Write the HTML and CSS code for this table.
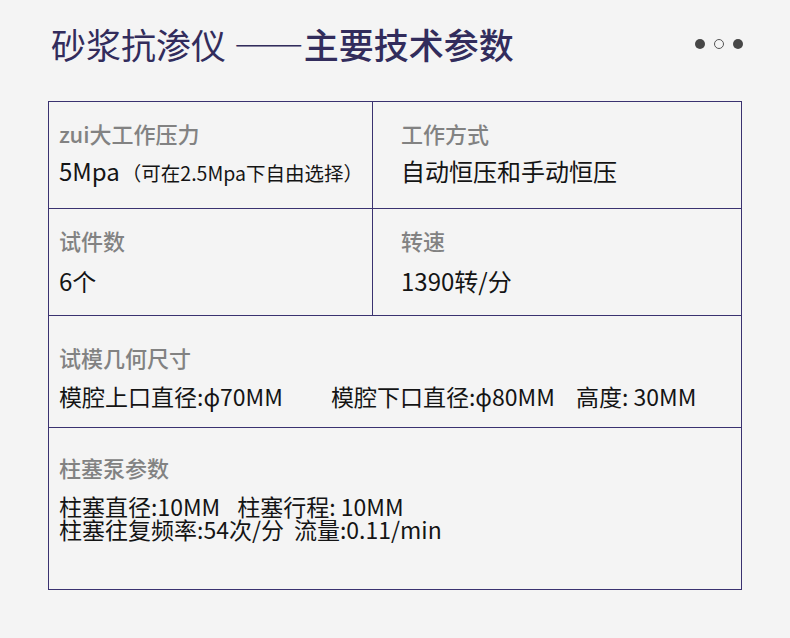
FILE: index.html
```html
<!DOCTYPE html>
<html lang="zh">
<head>
<meta charset="utf-8">
<title>砂浆抗渗仪 主要技术参数</title>
<link rel="stylesheet" href="styles.css">
</head>
<body>
<div class="page">
  <header class="header">
    <h1 class="title"><span class="title-a">砂浆抗渗仪 </span><span class="title-b">——主要技术参数</span></h1>
    <div class="dots">
      <span class="dot"></span>
      <span class="dot dot-hollow"></span>
      <span class="dot"></span>
    </div>
  </header>

  <div class="specs">
    <div class="row row-split row-first">
      <div class="cell cell-left">
        <div class="label">zui大工作压力</div>
        <div class="value">5Mpa<span class="note">（可在2.5Mpa下自由选择）</span></div>
      </div>
      <div class="cell cell-right">
        <div class="label">工作方式</div>
        <div class="value">自动恒压和手动恒压</div>
      </div>
    </div>
    <div class="row row-split row-second">
      <div class="cell cell-left">
        <div class="label">试件数</div>
        <div class="value">6个</div>
      </div>
      <div class="cell cell-right">
        <div class="label">转速</div>
        <div class="value">1390转/分</div>
      </div>
    </div>
    <div class="row row-mould">
      <div class="cell cell-left cell-mould">
        <div class="label">试模几何尺寸</div>
        <div class="value value-sm"><span>模腔上口直径:ɸ70MM</span><span class="sp-wide">模腔下口直径:ɸ80MM</span><span class="sp-narrow">高度: 30MM</span></div>
      </div>
    </div>
    <div class="row row-pump">
      <div class="cell cell-left cell-pump">
        <div class="label">柱塞泵参数</div>
        <div class="value value-sm value-lines">
          <div>柱塞直径:10MM<span class="sp-mid">柱塞行程: 10MM</span></div>
          <div>柱塞往复频率:54次/分<span class="sp-small">流量:0.11/min</span></div>
        </div>
      </div>
    </div>
  </div>
</div>
</body>
</html>
```

FILE: styles.css
```css
* { box-sizing: border-box; }

html, body {
  margin: 0;
  padding: 0;
  background: #f4f4f4;
}

body {
  font-family: "Noto Sans CJK SC", "Noto Sans", sans-serif;
  color: #141414;
}

.page {
  width: 790px;
  height: 638px;
  padding-top: 26px;
}

.header {
  display: flex;
  align-items: center;
  justify-content: space-between;
  padding-left: 51px;
  padding-right: 47px;
  height: 35px;
}

.title {
  margin: 0;
  font-size: 35px;
  line-height: 35px;
  font-weight: 400;
  color: #322c5c;
  white-space: nowrap;
}

.title-b {
  font-weight: 500;
}

.dots {
  display: flex;
  gap: 9px;
  align-items: center;
}

.dot {
  width: 10px;
  height: 10px;
  border-radius: 50%;
  background: #474747;
}

.dot-hollow {
  background: transparent;
  border: 1.5px solid #555;
}

.specs {
  margin-top: 40px;
  margin-left: 48px;
  width: 694px;
  border: 1px solid #3a3270;
}

.row {
  border-bottom: 1px solid #3a3270;
}

.row:last-child {
  border-bottom: none;
}

.row-split {
  display: flex;
  height: 107px;
}

.row-mould {
  height: 112px;
}

.row-pump {
  height: 161px;
}

.cell {
  padding-top: 19px;
}

.cell-left {
  padding-left: 10px;
}

.row-split .cell-left {
  width: 324px;
  border-right: 1px solid #3a3270;
}

.cell-right {
  flex: 1;
  padding-left: 28px;
}

.cell-mould {
  padding-top: 29px;
}

.cell-pump {
  padding-top: 27px;
}

.label {
  font-size: 22px;
  line-height: 24px;
  font-weight: 500;
  color: #828282;
  margin-bottom: 16px;
}

.row-first .label {
  margin-bottom: 14px;
}

.row-second .label {
  margin-bottom: 17px;
}

.cell-mould .label {
  margin-bottom: 15px;
}

.value {
  font-size: 24px;
  line-height: 24px;
  white-space: nowrap;
}

.note {
  font-size: 19.5px;
  margin-left: 2px;
}

.value-sm {
  font-size: 23px;
}

.value-lines {
  line-height: 23px;
}

.sp-wide { margin-left: 48px; }
.sp-narrow { margin-left: 21px; }
.sp-mid { margin-left: 17px; }
.sp-small { margin-left: 10px; }
```
